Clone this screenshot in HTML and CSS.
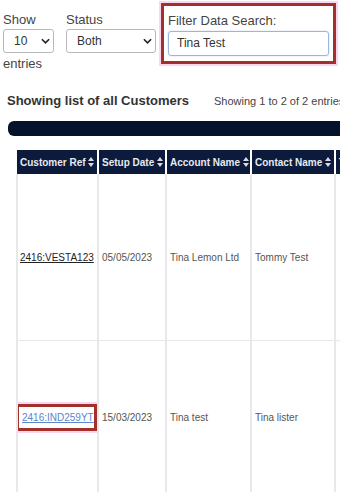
FILE: index.html
```html
<!DOCTYPE html>
<html>
<head>
<meta charset="utf-8">
<link rel="stylesheet" href="styles.css">
</head>
<body>
<div class="controls">
  <div class="group show">
    <label>Show</label>
    <div class="select small"><span>10</span><svg class="chev" viewBox="0 0 10 6" width="9" height="6"><path d="M1 1l4 4 4-4" fill="none" stroke="#222" stroke-width="1.8"/></svg></div>
    <div class="entries">entries</div>
  </div>
  <div class="group status">
    <label>Status</label>
    <div class="select wide"><span>Both</span><svg class="chev" viewBox="0 0 10 6" width="9" height="6"><path d="M1 1l4 4 4-4" fill="none" stroke="#222" stroke-width="1.8"/></svg></div>
  </div>
  <div class="filter">
    <label>Filter Data Search:</label>
    <div class="input">Tina Test</div>
  </div>
</div>

<div class="titlerow">
  <h2>Showing list of all Customers</h2>
  <span class="info">Showing 1 to 2 of 2 entries</span>
</div>

<div class="bar"></div>

<table class="grid">
  <colgroup>
    <col class="c1"><col class="c2"><col class="c3"><col class="c4"><col class="c5">
  </colgroup>
  <thead>
    <tr>
      <th>Customer Ref <span class="sort"></span></th>
      <th>Setup Date <span class="sort"></span></th>
      <th>Account Name <span class="sort"></span></th>
      <th>Contact Name <span class="sort"></span></th>
      <th>T</th>
    </tr>
  </thead>
  <tbody>
    <tr class="r1">
      <td><a class="ref">2416:VESTA123</a></td>
      <td>05/05/2023</td>
      <td>Tina Lemon Ltd</td>
      <td>Tommy Test</td>
      <td></td>
    </tr>
    <tr class="r2">
      <td><span class="hl"><a class="ref blue">2416:IND259YT</a></span></td>
      <td>15/03/2023</td>
      <td>Tina test</td>
      <td>Tina lister</td>
      <td></td>
    </tr>
  </tbody>
</table>
</body>
</html>
```

FILE: styles.css
```css
html, body {
  margin: 0;
  padding: 0;
  background: #fff;
  width: 340px;
  height: 492px;
  overflow: hidden;
  font-family: "Liberation Sans", Arial, sans-serif;
  color: #333;
}

.controls {
  display: flex;
  align-items: flex-start;
  padding: 3px 0 0 3px;
  height: 82px;
}

.group label {
  display: block;
  font-size: 13px;
  color: #444;
  margin-top: 9px;
  line-height: 15px;
}

.group.status {
  margin-left: 12px;
}

.select {
  margin-top: 2px;
  height: 22px;
  border: 1px solid #b8b8b8;
  border-radius: 3px;
  display: flex;
  align-items: center;
  justify-content: space-between;
  box-sizing: content-box;
  font-size: 12px;
  color: #333;
}

.select.small {
  width: 49px;
}

.select.small span { margin-left: 10px; }
.select.small .chev { margin-right: 3px; }

.select.wide {
  width: 88px;
}

.select.wide span { margin-left: 10px; }
.select.wide .chev { margin-right: 3px; }

.entries {
  font-size: 13px;
  color: #444;
  margin-top: 3px;
}

.filter {
  margin-left: 5px;
  width: 165px;
  height: 55px;
  border: 3px solid #a3302a;
  box-shadow: 0 0 0 2px #fbd7ef;
  padding: 0 0 0 4px;
  box-sizing: content-box;
}

.filter label {
  display: block;
  font-size: 13px;
  color: #444;
  margin-top: 7px;
  line-height: 15px;
}

.filter .input {
  margin-top: 3px;
  width: 151px;
  height: 23px;
  border: 1px solid #9bb6dd;
  border-radius: 3px;
  padding-left: 8px;
  font-size: 12px;
  line-height: 23px;
  color: #333;
  box-shadow: 0 0 2px #c8d8f0;
}

.titlerow {
  display: flex;
  align-items: baseline;
  padding-left: 7px;
  height: 28px;
  margin-top: 8px;
}

.titlerow h2 {
  margin: 0;
  font-size: 13px;
  font-weight: bold;
  color: #333;
  white-space: nowrap;
}

.info {
  margin-left: 25px;
  font-size: 11px;
  color: #444;
  white-space: nowrap;
}

.bar {
  margin-left: 8px;
  height: 15px;
  background: #04122b;
  border-radius: 6px 0 0 6px;
  margin-right: -10px;
}

.grid {
  margin: 14px 0 0 16px;
  border-collapse: collapse;
  table-layout: fixed;
  width: 400px;
}

.c1 { width: 81px; }
.c2 { width: 68px; }
.c3 { width: 85px; }
.c4 { width: 84px; }
.c5 { width: 82px; }

.grid th {
  background: #0c1a3b;
  color: #e8eaf0;
  font-size: 10px;
  font-weight: bold;
  text-align: left;
  height: 24px;
  padding: 0 3px;
  border-right: 2px solid #fff;
  white-space: nowrap;
  overflow: hidden;
}

.sort {
  display: inline-block;
  width: 7px;
  height: 10px;
  vertical-align: -1px;
  position: relative;
}

.sort::before, .sort::after {
  content: "";
  position: absolute;
  left: 0;
  border-left: 3.5px solid transparent;
  border-right: 3.5px solid transparent;
}

.sort::before {
  top: 0;
  border-bottom: 4px solid #d8dce6;
}

.sort::after {
  bottom: 0;
  border-top: 4px solid #d8dce6;
}

.grid td {
  font-size: 10px;
  color: #555;
  padding: 0 3px;
  border-left: 2px solid #e8e8e8;
  vertical-align: middle;
  white-space: nowrap;
  overflow: hidden;
}

.grid td:first-child {
  padding-left: 2px;
}

.r1 td { height: 166px; }
.r2 td { height: 152px; border-top: 1px solid #e8e8e8; }

.ref {
  color: #222;
  text-decoration: underline;
}

.ref.blue {
  color: #5b86cc;
}

.hl {
  display: inline-block;
  border: 3px solid #a3302a;
  padding: 5px 0 5px 3px;
  margin-left: -4px;
  box-shadow: 0 0 0 2px #fbd7ef;
}
```
